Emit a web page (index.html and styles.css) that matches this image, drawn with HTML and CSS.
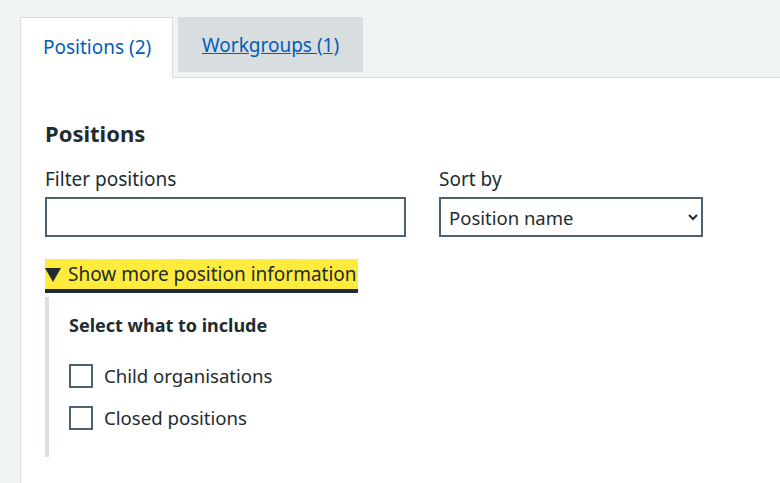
FILE: index.html
```html
<!DOCTYPE html>
<html>
	<head>
		<meta charset="utf-8" />
		<meta name="viewport" content="width=device-width, initial-scale=1">
		<title>Positions</title>
		<link rel="stylesheet" href="styles.css">
	</head>
	<body>
		<div class="tabs">
			<ul class="tab-list">
				<li class="tab tab-selected"><a href="#positions" class="tab-link">Positions (2)</a></li>
				<li class="tab"><a href="#workgroups" class="tab-link">Workgroups (1)</a></li>
			</ul>
			<div class="panel" id="positions">
				<h2 class="heading">Positions</h2>
				<div class="filters">
					<div class="field field-filter">
						<label class="label" for="filter">Filter positions</label>
						<input type="text" id="filter" class="input">
					</div>
					<div class="field field-sort">
						<label class="label" for="sort">Sort by</label>
						<select id="sort" class="select">
							<option>Position name</option>
							<option>Start date</option>
						</select>
					</div>
				</div>
				<details class="details" open>
					<summary class="summary"><span class="summary-text">Show more position information</span></summary>
					<div class="details-text">
						<fieldset class="fieldset">
							<legend class="legend">Select what to include</legend>
							<div class="checkbox">
								<input type="checkbox" id="child" class="checkbox-input">
								<label for="child" class="checkbox-label">Child organisations</label>
							</div>
							<div class="checkbox">
								<input type="checkbox" id="closed" class="checkbox-input">
								<label for="closed" class="checkbox-label">Closed positions</label>
							</div>
						</fieldset>
					</div>
				</details>
			</div>
		</div>
	</body>
</html>
```

FILE: styles.css
```css
* {
	padding: 0;
	margin: 0;
	box-sizing: border-box;
}

body {
	background-color: #f0f4f5;
	color: #212b32;
	font-family: "Noto Sans", "Liberation Sans", sans-serif;
	font-size: 19px;
	line-height: 24px;
	padding: 17px 0 0 20px;
}

.tab-list {
	list-style: none;
	display: flex;
	align-items: flex-start;
	gap: 5px;
}

.tab {
	background-color: #d8dde0;
	width: 185px;
	height: 55px;
	padding: 16px 24px 0;
}

.tab-selected {
	background-color: #fff;
	width: 153px;
	height: 61px;
	padding: 17px 22px 0;
	border: 1px solid #d8dde0;
	border-bottom: none;
	margin-bottom: -1px;
	position: relative;
	z-index: 1;
}

.tab-link {
	color: #005eb8;
	text-decoration: underline;
	white-space: nowrap;
}

.tab-selected .tab-link {
	text-decoration: none;
}

.panel {
	background-color: #fff;
	border: 1px solid #d8dde0;
	border-right: none;
	padding: 39px 24px 40px;
	min-height: 420px;
}

.heading {
	font-size: 22px;
	line-height: 32px;
	font-weight: 700;
	margin-bottom: 18px;
}

.filters {
	display: flex;
	gap: 33px;
}

.label {
	display: block;
	margin-bottom: 6px;
}

.field-filter {
	width: 361px;
}

.field-sort {
	width: 264px;
}

.input,
.select {
	display: block;
	width: 100%;
	height: 40px;
	border: 2px solid #4c6272;
	border-radius: 0;
	background-color: #fff;
	font-family: inherit;
	font-size: 18.5px;
	color: #212b32;
}

.select {
	padding: 0 4px 0 4px;
}

.details {
	margin-top: 22px;
}

.summary {
	display: inline-block;
	list-style: none;
	cursor: pointer;
	background-color: #ffeb3b;
	box-shadow: 0 4px 0 #212b32;
	height: 30px;
	line-height: 30px;
	padding-right: 1px;
}

.summary::-webkit-details-marker {
	display: none;
}

.summary::before {
	content: "";
	display: inline-block;
	width: 0;
	height: 0;
	border-left: 8px solid transparent;
	border-right: 8px solid transparent;
	border-top: 14px solid #212b32;
	margin-right: 7px;
	vertical-align: -1px;
}

.details-text {
	margin-top: 8px;
	border-left: 4px solid #d8dde0;
	padding: 16px 0 27px 20px;
}

.fieldset {
	border: none;
}

.legend {
	font-size: 18px;
	font-weight: 700;
	line-height: 24px;
	margin-bottom: 27px;
}

.checkbox {
	display: flex;
	align-items: center;
	gap: 11px;
	height: 24px;
}

.checkbox + .checkbox {
	margin-top: 18px;
}

.checkbox-input {
	appearance: none;
	width: 24px;
	height: 24px;
	border: 2px solid #4c6272;
	background-color: #fff;
	flex-shrink: 0;
}

.checkbox-label {
	font-size: 18.6px;
	white-space: nowrap;
}
```
